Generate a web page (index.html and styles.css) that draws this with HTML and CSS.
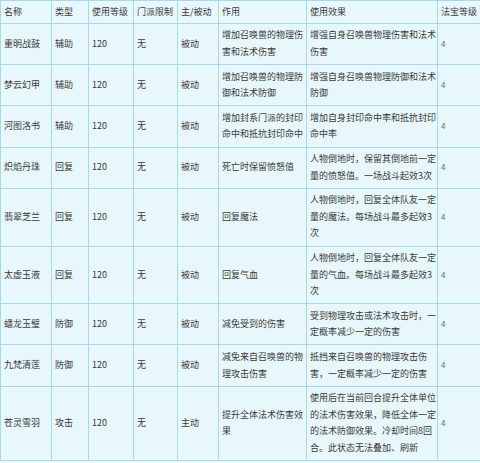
FILE: index.html
```html
<!DOCTYPE html>
<html lang="zh-CN">
<head>
<meta charset="utf-8">
<title>法宝</title>
<link rel="stylesheet" href="styles.css">
</head>
<body>
<table class="fabao">
  <colgroup>
    <col class="c-name"><col class="c-type"><col class="c-lv"><col class="c-men"><col class="c-act"><col class="c-use"><col class="c-eff"><col class="c-grade">
  </colgroup>
  <thead>
    <tr class="head">
      <td>名称</td><td>类型</td><td>使用等级</td><td>门派限制</td><td>主/被动</td><td>作用</td><td>使用效果</td><td>法宝等级</td>
    </tr>
  </thead>
  <tbody>
    <tr>
      <td>重明战鼓</td><td>辅助</td><td>120</td><td>无</td><td>被动</td><td>增加召唤兽的物理伤害和法术伤害</td><td>增强自身召唤兽物理伤害和法术伤害</td><td class="g">4</td>
    </tr>
    <tr>
      <td>梦云幻甲</td><td>辅助</td><td>120</td><td>无</td><td>被动</td><td>增加召唤兽的物理防御和法术防御</td><td>增强自身召唤兽物理防御和法术防御</td><td class="g">4</td>
    </tr>
    <tr>
      <td>河图洛书</td><td>辅助</td><td>120</td><td>无</td><td>被动</td><td>增加封系门派的封印命中和抵抗封印命中</td><td>增加自身封印命中率和抵抗封印命中率</td><td class="g">4</td>
    </tr>
    <tr>
      <td>炽焰丹珠</td><td>回复</td><td>120</td><td>无</td><td>被动</td><td>死亡时保留愤怒值</td><td>人物倒地时，保留其倒地前一定量的愤怒值。一场战斗起效3次</td><td class="g">4</td>
    </tr>
    <tr>
      <td>翡翠芝兰</td><td>回复</td><td>120</td><td>无</td><td>被动</td><td>回复魔法</td><td>人物倒地时，回复全体队友一定量的魔法。每场战斗最多起效3次</td><td class="g">4</td>
    </tr>
    <tr>
      <td>太虚玉液</td><td>回复</td><td>120</td><td>无</td><td>被动</td><td>回复气血</td><td>人物倒地时，回复全体队友一定量的气血。每场战斗最多起效3次</td><td class="g">4</td>
    </tr>
    <tr>
      <td>蟠龙玉璧</td><td>防御</td><td>120</td><td>无</td><td>被动</td><td>减免受到的伤害</td><td>受到物理攻击或法术攻击时，一定概率减少一定的伤害</td><td class="g">4</td>
    </tr>
    <tr>
      <td>九梵清莲</td><td>防御</td><td>120</td><td>无</td><td>被动</td><td>减免来自召唤兽的物理攻击伤害</td><td>抵挡来自召唤兽的物理攻击伤害，一定概率减少一定的伤害</td><td class="g">4</td>
    </tr>
    <tr>
      <td>苍灵雪羽</td><td>攻击</td><td>120</td><td>无</td><td>主动</td><td>提升全体法术伤害效果</td><td>使用后在当前回合提升全体单位的法术伤害效果，降低全体一定的法术防御效果。冷却时间8回合。此状态无法叠加、刷新</td><td class="g">4</td>
    </tr>
  </tbody>
</table>
</body>
</html>
```

FILE: styles.css
```css
html, body {
  margin: 0;
  padding: 0;
  background: #e8f7fc;
  overflow: hidden;
}

.fabao {
  border-collapse: collapse;
  table-layout: fixed;
  width: 490px;
  background: #e8f7fc;
  font-family: "Noto Sans CJK SC", "Liberation Sans", sans-serif;
  font-size: 9px;
  line-height: 16.6px;
  color: #3a3a3a;
}

.c-name { width: 51px; }
.c-type { width: 37px; }
.c-lv { width: 45px; }
.c-men { width: 44px; }
.c-act { width: 41px; }
.c-use { width: 88px; }
.c-eff { width: 131px; }
.c-grade { width: 53px; }

.fabao td {
  border: 1px solid #a8d8ea;
  padding: 3.5px 0 3.5px 3px;
  vertical-align: middle;
  text-align: left;
}

.fabao .head td {
  padding-top: 2.7px;
  padding-bottom: 2.7px;
}

.fabao td.g {
  color: #6a6a6a;
  font-size: 8px;
}
```
